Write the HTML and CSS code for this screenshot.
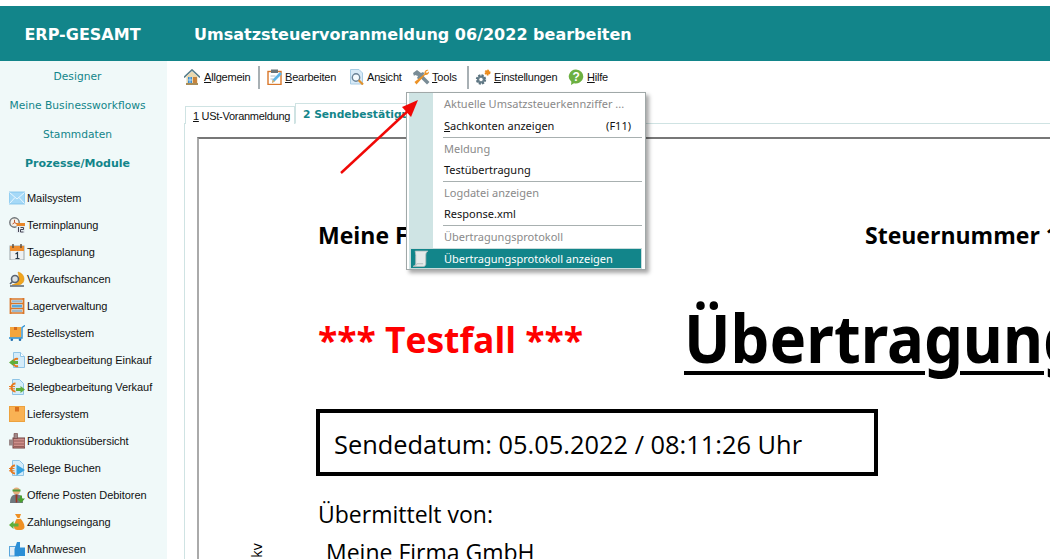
FILE: index.html
```html
<!DOCTYPE html>
<html lang="de">
<head>
<meta charset="utf-8">
<title>ERP-GESAMT</title>
<link rel="stylesheet" href="styles.css">
</head>
<body>
<div class="app">
  <header class="topbar">
    <div class="brand">ERP-GESAMT</div>
    <h1 class="title">Umsatzsteuervoranmeldung 06/2022 bearbeiten</h1>
  </header>
  <div class="body">
    <aside class="sidebar">
      <nav class="topnav">
        <a>Designer</a>
        <a>Meine Businessworkflows</a>
        <a>Stammdaten</a>
        <a class="active">Prozesse/Module</a>
      </nav>
      <ul class="modules">
        <li><svg class="ico" viewBox="0 0 16 16"><rect x="0" y="2" width="16" height="12" fill="#a6d9f7" stroke="#7cc0ea" stroke-width=".8"/><path d="M0.500 2.500l7.500 6.500 7.500-6.500M.5 13.500l5.500-6M15.500 13.500l-5.500-6" fill="none" stroke="#eaf7fe"/></svg>Mailsystem</li>
        <li><svg class="ico" viewBox="0 0 16 16"><circle cx="5.500" cy="5.500" r="4.700" fill="#f2f0ea" stroke="#6f7478" stroke-width="1.400"/><path d="M5.500 2.800v2.900l-2 1.300M5.500 5.700l2.500 1" fill="none" stroke="#c0562a"/><rect x="7.500" y="6" width="8.500" height="3" fill="#e8862a"/><rect x="7.500" y="9" width="8.500" height="7" fill="#e4ecf0"/><path d="M9.500 10v5M11.500 10.500h3v2h-3v2.500h3" fill="none" stroke="#334" stroke-width=".9"/></svg>Terminplanung</li>
        <li><svg class="ico" viewBox="0 0 16 16"><rect x="1" y="2" width="14" height="14" fill="#eef1f2" stroke="#9aa4a8"/><rect x="1" y="2" width="14" height="5" fill="#ef8d2e"/><path d="M4 0v4M12 0v4" stroke="#5c4a3a" stroke-width="1.400"/><path d="M6.500 10l2-1.300V14M6.500 14.500h4" fill="none" stroke="#2a3a48" stroke-width="1.200"/></svg>Tagesplanung</li>
        <li><svg class="ico" viewBox="0 0 16 16"><path d="M9 1c4 1 6 4 6 7 0 4-3 6-7 6H3c4-1 7-3 7-7 0-2-.5-4-1-6z" fill="#f0a51e" stroke="#d98a10" stroke-width=".5"/><circle cx="6" cy="8" r="3.500" fill="#dbe2e6" stroke="#5a6470" stroke-width="1.600"/><path d="M3.500 10.500L1 13M1 15h14" stroke="#5a6470" stroke-width="1.600"/></svg>Verkaufschancen</li>
        <li><svg class="ico" viewBox="0 0 16 16"><path d="M1.500 0v16M14.500 0v16" stroke="#d9772a" stroke-width="1.800"/><path d="M1 1h14M1 5.500h14M1 10.500h14M1 15h14" stroke="#d9772a" stroke-width="1.500"/><rect x="3" y="2.200" width="10" height="2.300" fill="#9cb8cc"/><rect x="3" y="6.700" width="10" height="2.800" fill="#5aa8dc"/><rect x="3" y="11.600" width="10" height="2.400" fill="#9cb8cc"/></svg>Lagerverwaltung</li>
        <li><svg class="ico" viewBox="0 0 16 16"><rect x="1" y="2" width="11" height="10.500" fill="#f5a53c"/><rect x="5" y="2" width="3" height="3" fill="#d2691e"/><path d="M16 0.500L13 2.500v10.500H0" fill="none" stroke="#2c8fd0" stroke-width="1.400"/><circle cx="2.800" cy="14.700" r="1.300" fill="#1f6fb0"/><circle cx="11" cy="14.700" r="1.300" fill="#1f6fb0"/></svg>Bestellsystem</li>
        <li><svg class="ico" viewBox="0 0 16 16"><path d="M4.500 .5h7l4 4v11h-11z" fill="#d4ecfa" stroke="#8fc4e6"/><path d="M11.500 .5v4h4" fill="#fff" stroke="#8fc4e6"/><path d="M9 7a3.700 3.700 0 1 0 0 7" fill="none" stroke="#e8791f" stroke-width="2"/><path d="M0 10.500l4.500-3.500v2h4.500v3H4.500v2z" fill="#5fae3c"/></svg>Belegbearbeitung Einkauf</li>
        <li><svg class="ico" viewBox="0 0 16 16"><path d="M3.500 .5h7l4 4v11h-11z" fill="#d4ecfa" stroke="#8fc4e6"/><path d="M6.500 4.500a4 4 0 1 0 0 8" fill="none" stroke="#e8791f" stroke-width="2"/><path d="M0 7.500h6M0 9.800h6" stroke="#e8791f"/><path d="M16 10.500l-4.500-3.500v2H7v3h4.500v2z" fill="#5fae3c"/></svg>Belegbearbeitung Verkauf</li>
        <li><svg class="ico" viewBox="0 0 16 16"><rect x=".5" y=".5" width="15" height="15" fill="#f9b254" stroke="#eda23e"/><rect x="6" y="1" width="4" height="4.500" fill="#d9701e"/></svg>Liefersystem</li>
        <li><svg class="ico" viewBox="0 0 16 16"><rect x="4" y="5" width="12" height="10" fill="#cf8f8a" stroke="#6e3e3c"/><path d="M0 6.500h4v6H0z" fill="#9b8a8a"/><path d="M5 .5h3.500v5H5z" fill="#a08888" stroke="#6e3e3c" stroke-width=".6"/><path d="M5.500 8h9M5.500 11h9M5.500 13.500h9" stroke="#5a2e2c" stroke-dasharray="1 1"/></svg>Produktionsübersicht</li>
        <li><svg class="ico" viewBox="0 0 16 16"><path d="M3.500 .5h7l4 4v11h-11z" fill="#d4ecfa" stroke="#8fc4e6"/><path d="M6 5.500a4 4 0 1 0 0 8" fill="none" stroke="#e8791f" stroke-width="2"/><path d="M0 8.500h5.500M0 10.800h5.500" stroke="#e8791f"/><path d="M7.500 4.500l8.500 5.500-8.500 5.500z" fill="#35a2e0"/></svg>Belege Buchen</li>
        <li><svg class="ico" viewBox="0 0 16 16"><circle cx="7.500" cy="4" r="3.500" fill="#e6ae7c"/><path d="M3.500 2.500h8v2h-8z" fill="#4f9a3a"/><path d="M1 16c0-6 2-8.500 6.500-8.500S14 10 14 16z" fill="#6e787e"/><path d="M6.500 7.500h2l-.3 8h-1.400z" fill="#a03020"/><path d="M13 8.500v3h3l-4 4.500-4-4.500h3v-3z" fill="#4aa030"/></svg>Offene Posten Debitoren</li>
        <li><svg class="ico" viewBox="0 0 16 16"><path d="M6 0h6l-1.500 4c3 2 5 6 5 9 0 2.500-2.500 3-5.500 3s-5-.5-5-3c0-3 1.500-7 3.500-9z" fill="#ee9024"/><path d="M7 4.500h4" stroke="#fff3d8"/><path d="M0 11l4.500-4v2.500h5v3h-5V15z" fill="#5fae3c"/></svg>Zahlungseingang</li>
        <li><svg class="ico" viewBox="0 0 16 16"><rect x="0.500" y="5.500" width="9" height="9.500" fill="#e4eef6" stroke="#5aa6dc"/><path d="M5.500 15V8l2.500-7h3v5.500h5V15z" fill="#2c8fd6"/></svg>Mahnwesen</li>
      </ul>
    </aside>
    <main class="main">
      <div class="toolbar">
        <span class="tool t-home"><svg class="ico" viewBox="0 0 16 16"><path d="M0 8.500L8 1l8 7.500" fill="none" stroke="#5a7f8c" stroke-width="1.700"/><path d="M2.500 7.500L8 2.500l5.500 5V15h-11z" fill="#ead9ae"/><rect x="2" y="14" width="12" height="2" fill="#a88c58"/><rect x="4" y="8" width="4" height="6" fill="#3c8ed0"/><rect x="9" y="8" width="4" height="6" fill="#c8843c"/><path d="M6 8v6M4 11h4" stroke="#fff" stroke-width=".6"/></svg><span><u>A</u>llgemein</span></span>
        <span class="sep"></span>
        <span class="tool t-edit"><svg class="ico" viewBox="0 0 16 16"><rect x="1" y="2.500" width="13" height="13" fill="#fff" stroke="#d9772a" stroke-width="1.400"/><rect x="4" y="0.500" width="7" height="3.500" fill="#6a7478"/><path d="M3.500 7h5M3.500 10h3" stroke="#b0bcc4"/><path d="M5 14l.7-3.500L13 3l2 2-7.500 7.500z" fill="#5fb4e6"/><path d="M5 14l.7-3.500 2 2z" fill="#e8b060"/></svg><span><u>B</u>earbeiten</span></span>
        <span class="tool t-view"><svg class="ico" viewBox="0 0 16 16"><path d="M1.500.5h8.500l3.500 3.500v11h-12z" fill="#d8eaf7" stroke="#a8cce4"/><circle cx="7" cy="8.500" r="3.700" fill="#f4fafd" stroke="#6a8296" stroke-width="1.400"/><path d="M9.700 11.200l4.300 4.300" stroke="#e0912c" stroke-width="2.200"/></svg><span>An<u>s</u>icht</span></span>
        <span class="tool t-tools"><svg class="ico ico-l" viewBox="0 0 17 16"><path d="M0 4l4-3 4 3 2 -1 1.500 1.500-1.500 2 6.500 6.500-2.500 2.500-6.500-6.500-2 1.500L4 9l1-2-3-1-1 1z" fill="#7a8c96"/><path d="M15.500 1a3.200 3.200 0 0 0-4 4L1.500 13l2 2.500L12 6a3.200 3.200 0 0 0 4-3.500l-2 1.500-1.500-1z" fill="#ec9226"/></svg><span><u>T</u>ools</span></span>
        <span class="sep"></span>
        <span class="tool t-set"><svg class="ico" viewBox="0 0 16 16"><circle cx="6" cy="10.500" r="4" fill="#6f8591" stroke="#5c7480" stroke-width="2.400" stroke-dasharray="2 1.140"/><circle cx="6" cy="10.500" r="1.700" fill="#fff"/><circle cx="12.500" cy="3.500" r="2.200" fill="#ee8f22" stroke="#ec8814" stroke-width="1.600" stroke-dasharray="1.400 .9"/></svg><span><u>E</u>instellungen</span></span>
        <span class="tool t-help"><svg class="ico" viewBox="0 0 16 16"><path d="M8 .5a7.500 7 0 1 1-2 13.800L3 16l.4-3.200A7.500 7 0 0 1 8 .5z" fill="#6cb041"/><text x="8" y="12" class="q">?</text></svg><span><u>H</u>ilfe</span></span>
      </div>
      <div class="tabs">
        <span class="tab"><u>1</u> USt-Voranmeldung</span>
        <span class="tab current">2 Sendebestätigung</span>
      </div>
      <div class="panel">
        <div class="paper">
          <span class="margin-note">kv</span>
          <div class="row-head"><span class="head-firm">Meine Firma GmbH</span><span>Steuernummer 1</span></div>
          <div class="row-title"><span class="test">*** Testfall ***</span><span class="headline">Übertragung</span></div>
          <div class="datebox">Sendedatum: 05.05.2022 / 08:11:26 Uhr</div>
          <p class="from">Übermittelt von:</p>
          <p class="firm">Meine Firma GmbH</p>
        </div>
      </div>
    </main>
  </div>
  <div class="menu">
    <div class="menu-item first muted">Aktuelle Umsatzsteuerkennziffer ...</div>
    <div class="menu-item"><span><u>S</u>achkonten anzeigen</span><span>(F11)</span></div>
    <div class="menu-rule"></div>
    <div class="menu-item muted">Meldung</div>
    <div class="menu-item">Testübertragung</div>
    <div class="menu-rule"></div>
    <div class="menu-item muted">Logdatei anzeigen</div>
    <div class="menu-item">Response.xml</div>
    <div class="menu-rule"></div>
    <div class="menu-item muted">Übertragungsprotokoll</div>
    <div class="menu-item selected"><svg class="scroll" viewBox="0 0 18 18"><path d="M4 2h12c-1.500 1-2 2-2 4v8c0 1.500-1 2.500-2 2.500H2c1.500-.5 2.500-1.500 2.500-3V6C4.500 4.500 4 3 4 2z" fill="#e6eaea" stroke="#b4bebe" stroke-width=".8"/><path d="M2 16.500c2 0 3.500-1 3.500-2.500h6" fill="none" stroke="#a9b4b4" stroke-width=".8"/></svg>Übertragungsprotokoll anzeigen</div>
  </div>
  <svg class="arrow" viewBox="0 0 90 80"><path d="M1 78L70 14" stroke="#f00806" stroke-width="2.400" fill="none"/><path d="M78 5L71 22 62 12z" fill="#f00806"/></svg>
</div>
</body>
</html>
```
FILE: styles.css
```css
html, body { margin: 0; padding: 0; background: #fff; }
.app {
  position: relative;
  width: 1050px;
  height: 559px;
  overflow: hidden;
  padding-top: 6px;
  box-sizing: border-box;
  display: flex;
  flex-direction: column;
  font-family: "Liberation Sans", sans-serif;
  font-size: 11px;
  color: #111;
}
.topbar {
  flex: 0 0 55px;
  box-sizing: border-box;
  padding-top: 2px;
  background: #12858a;
  color: #fff;
  display: flex;
  align-items: center;
  font-weight: 700;
  font-family: "DejaVu Sans", sans-serif;
}
.brand { width: 165px; text-align: center; font-size: 16px; }
.title { margin: 0 0 0 29px; font-size: 16px; font-weight: 700; }
.body { flex: 1; display: flex; min-height: 0; }
.sidebar { width: 167px; flex: none; background: #f0f9f9; }
.topnav { display: flex; flex-direction: column; align-items: center; padding: 1px 12px 0 0; color: #12858a; font-family: "DejaVu Sans", sans-serif; font-size: 10.700px; }
.topnav a { height: 29px; line-height: 29px; white-space: nowrap; }
.topnav .active { font-weight: 700; font-size: 11px; }
.modules { list-style: none; margin: 6px 0 0; padding: 0 0 0 9px; letter-spacing: -.06px; }
.modules li { height: 27px; display: flex; align-items: center; gap: 2px; white-space: nowrap; }
.ico { width: 16px; height: 16px; flex: none; }
.ico-l { width: 17px; }
.main { flex: 1; min-width: 0; display: flex; flex-direction: column; }
.toolbar { display: flex; align-items: center; height: 32px; padding-left: 17px; flex: none; letter-spacing: -.2px; }
.tool { display: flex; align-items: center; gap: 2px; white-space: nowrap; }
.t-home { width: 74px; gap: 4px; }
.sep { width: 2px; height: 23px; background: #a8b0b4; }
.t-edit { margin-left: 7px; width: 82px; }
.t-view { width: 64px; }
.t-tools { width: 54px; }
.t-set { margin-left: 6px; width: 93px; gap: 3px; }
.t-help { gap: 3px; }
.q { font: 700 12px "Liberation Sans", sans-serif; fill: #fff; text-anchor: middle; }
.tabs { display: flex; align-items: flex-end; height: 31px; padding-left: 18px; flex: none; position: relative; z-index: 1; margin-bottom: -1px; }
.tab { height: 18px; line-height: 19px; padding: 0 0 0 7px; border: 1px solid #cfe3e3; border-bottom: 0; background: #fff; box-sizing: border-box; width: 110px; white-space: nowrap; letter-spacing: -.28px; }
.tab.current { height: 21px; line-height: 22px; width: 130px; color: #12858a; font-weight: 700; font-family: "DejaVu Sans", sans-serif; font-size: 10.700px; letter-spacing: 0; border-bottom: 1px solid #fff; overflow: hidden; }
.panel { flex: 1; min-height: 0; margin-left: 17px; border-top: 1px solid #cfe3e3; border-left: 1px solid #cfe3e3; padding: 13px 0 0 12px; }
.paper { position: relative; height: 100%; border-top: 2px solid #777; border-left: 2px solid #aaa; box-sizing: border-box; padding: 80px 0 0 119px; font-family: "Open Sans", sans-serif; color: #000; overflow: hidden; white-space: nowrap; }
.row-head { display: flex; font-size: 23px; font-weight: 700; line-height: 32px; }
.head-firm { flex: none; width: 547px; }
.row-title { display: flex; align-items: flex-start; margin-top: 41px; height: 113px; }
.test { flex: none; color: #f00; font-size: 35.400px; font-weight: 700; width: 366px; margin-top: 22px; line-height: 50px; }
.headline { flex: none; margin-top: 1px; font-family: "Noto Sans", sans-serif; font-size: 67px; font-weight: 700; line-height: 88px; text-decoration: underline; text-decoration-thickness: 4px; text-underline-offset: 8px; transform: scaleX(.92); transform-origin: left center; }
.datebox { width: 562px; height: 67px; box-sizing: border-box; border: 4px solid #000; margin: 4px 0 0 -2px; padding-left: 14px; line-height: 63px; font-size: 25.400px; }
.from { margin: 22px 0 0; font-size: 23px; line-height: 32px; }
.firm { margin: 6px 0 0 8px; font-size: 23px; line-height: 32px; }
.margin-note { position: absolute; left: 50px; top: 402px; transform: rotate(-90deg); font-size: 14px; }
.menu { position: absolute; z-index: 2; left: 406px; top: 92px; width: 240px; height: 178px; box-sizing: border-box; border: 1px solid #a0a8a8; background: linear-gradient(to right, #fff 2px, #cfe4e4 2px, #cfe4e4 26px, #fff 26px); box-shadow: 3px 3px 4px rgba(0,0,0,.35); padding: 0 3px; font-family: "Noto Sans", sans-serif; font-size: 11px; }
.menu-item { height: 21px; line-height: 20px; padding: 0 11px 0 34px; display: flex; justify-content: space-between; white-space: nowrap; position: relative; }
.menu-item.first { height: 22px; line-height: 22px; }
.menu-item.first + .menu-item { height: 22px; line-height: 22px; }
.menu-rule { height: 1px; background: #a8b0b0; margin: 0 0 1px 33px; }
.muted { color: #8a8a8a; }
.selected { background: #12858a; color: #fff; border: 1px solid #c8dcdc; box-sizing: border-box; justify-content: flex-start; padding-left: 33px; line-height: 19px; }
.scroll { position: absolute; left: 0; top: 0; width: 19px; height: 19px; }
.arrow { position: absolute; z-index: 3; left: 340px; top: 95px; width: 90px; height: 80px; }
```
